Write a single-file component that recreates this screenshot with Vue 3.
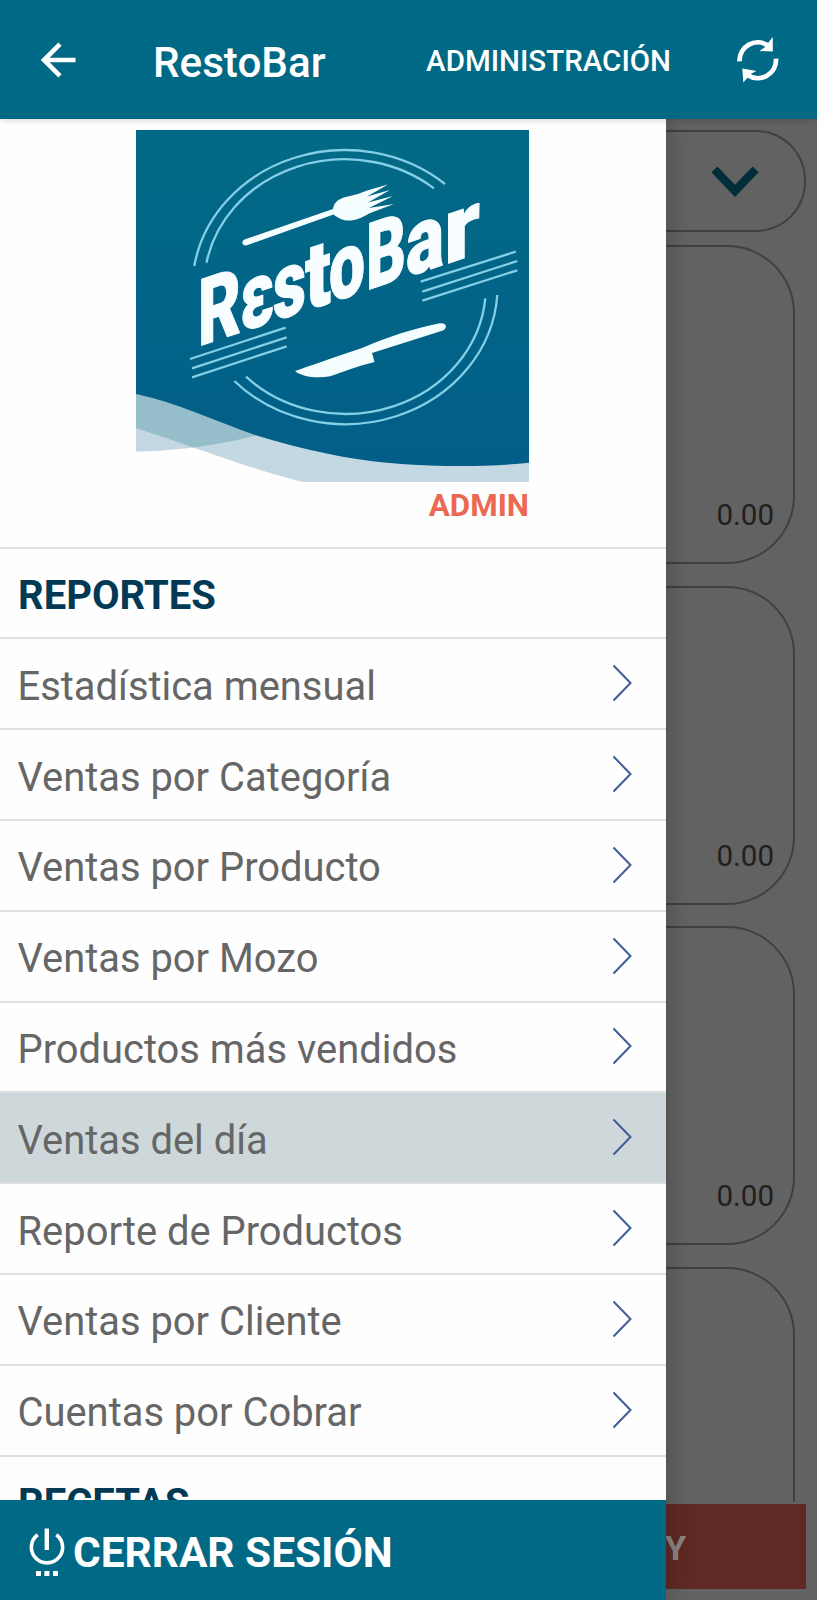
<script setup>
import { ref } from "vue";

const reports = [
  "Estadística mensual",
  "Ventas por Categoría",
  "Ventas por Producto",
  "Ventas por Mozo",
  "Productos más vendidos",
  "Ventas del día",
  "Reporte de Productos",
  "Ventas por Cliente",
  "Cuentas por Cobrar",
];
const selected = ref("Ventas del día");

// the last card has no total yet
const totals = ["0.00", "0.00", "0.00", ""];

// x offset and width of every letter of the logo wordmark
const wordmark = [
  { char: "R", x: 0, width: 43 },
  { char: "ε", x: 42, width: 34 },
  { char: "s", x: 75, width: 33 },
  { char: "t", x: 107, width: 26 },
  { char: "o", x: 131, width: 36 },
  { char: "B", x: 168, width: 40 },
  { char: "a", x: 208, width: 38 },
  { char: "r", x: 246, width: 36 },
];
</script>

<template>
  <div class="app">
    <header class="toolbar">
      <svg class="back-icon" viewBox="0 0 36 36" aria-hidden="true">
        <path d="M35.5 18H4M20 2.2L4 18L20 33.8" />
      </svg>
      <h1 class="title">RestoBar</h1>
      <span class="section">ADMINISTRACIÓN</span>
      <svg class="refresh-icon" viewBox="736 36 44 46" aria-hidden="true">
        <path class="arc" d="M739.5 60.3A18.3 18.3 0 0 1 768 44.5" />
        <path class="head" d="M772.8 36L772.8 50.6L759.5 50L764.5 46.5Z" />
        <path class="arc" d="M776 57.7A18.3 18.3 0 0 1 747.5 74" />
        <path class="head" d="M742.3 67.6L756.5 70L751.5 72.5L743.3 81.5Z" />
      </svg>
    </header>

    <div class="body">
      <main class="content">
        <div class="filter">
          <svg class="filter-icon" viewBox="0 0 48 32" aria-hidden="true">
            <path d="M3.4 3.4L24 25L44.6 3.4" />
          </svg>
        </div>
        <div class="cards">
          <div v-for="(total, i) in totals" :key="i" class="card">{{ total }}</div>
        </div>
        <button class="pay">Y</button>
      </main>

      <aside class="drawer">
        <div class="profile">
          <svg class="logo" viewBox="136 130 393 352" role="img" aria-label="RestoBar">
            <defs>
              <linearGradient id="sea" x1="0" y1="0" x2="0" y2="1">
                <stop offset="0" stop-color="#026a86" />
                <stop offset="1" stop-color="#025e88" />
              </linearGradient>
            </defs>
            <rect x="136" y="130" width="393" height="352" fill="#fefefe" />
            <path
              fill="#c3d8e3"
              d="M136 394L255 435L529 455V482H303C255 470 225 458 193 447.5C170 450 155 451.5 136 451.5Z"
            />
            <path fill="#95bdca" d="M136 390L262 434C240 440 215 445 193 447.5Q165 437 136 428.3Z" />
            <path
              fill="url(#sea)"
              d="M136 130H529V462.7C490 467 445 466.5 413 464.8C350 461 305 450 255 435C215 421 175 402 136 394Z"
            />
            <g class="plate">
              <path d="M194.3 266A152.5 138 0 0 1 445 184" />
              <path d="M206.5 262.7A140.5 127 0 0 1 434 188.3" />
              <path d="M497.3 295A152.5 138 0 0 1 234.3 381" />
              <path d="M485.3 298.3A140.5 127 0 0 1 246 376.7" />
              <path d="M420.7 281.7L515.7 251.7M422.3 291.7L517.3 261M422.3 300.7L517.3 270.3" />
              <path d="M190 359L285.7 327.7M192 368.3L286.7 337.3M192 377.3L286.7 346.3" />
            </g>
            <g class="cutlery">
              <path
                d="M244.5 239.5L333 209C334 201 341 197.5 350 196C357 194.5 362 192.5 367 190.5L388 184.5L367 196.5L390 190L368 202.5L393 196L369 208L394 204L369 213.5C360 219 350 223 341 219C337 217.500 335 215.500 333.500 214.500L247 245.300C242.500 246.300 240.500 241.500 244.500 239.500Z"
              />
              <path
                d="M295 371C303 368.500 335 357 362 348C385 338 415 328 440 323.300C447 322.500 447.500 328 443 330.500L372 353L374.500 362C357 366 340 373 330 376.300C318 378.500 301 377 295 371Z"
              />
            </g>
            <g class="wordmark" transform="translate(198 346.5) skewY(-18.4)">
              <text
                v-for="letter in wordmark"
                :key="letter.char"
                :x="letter.x"
                y="0"
                :textLength="letter.width"
                lengthAdjust="spacingAndGlyphs"
              >{{ letter.char }}</text>
            </g>
          </svg>
          <span class="role">ADMIN</span>
        </div>

        <nav class="menu">
          <h2 class="group">REPORTES</h2>
          <a
            v-for="item in reports"
            :key="item"
            class="item"
            :class="{ 'item--active': item === selected }"
            @click="selected = item"
          >
            <span>{{ item }}</span>
            <svg class="chevron" viewBox="0 0 20 38" aria-hidden="true">
              <path d="M1.5 1.5L18.5 19L1.5 36.5" />
            </svg>
          </a>
          <h2 class="group">RECETAS</h2>
        </nav>

        <button class="logout">
          <svg class="power-icon" viewBox="29 1527 36 50" aria-hidden="true">
            <path class="ring" d="M37.7 1534.8A15.6 15.6 0 1 0 56.3 1534.8" />
            <path class="bar" d="M46.8 1528.5V1550" />
            <path class="dots" d="M36 1573.5H41M44.4 1573.5H49.4M53 1573.5H58" />
          </svg>
          <span>CERRAR SESIÓN</span>
        </button>
      </aside>
    </div>
  </div>
</template>

<style>
body {
  margin: 0;
  background: #626262;
}
</style>

<style scoped>
.app {
  display: flex;
  flex-direction: column;
  width: 817px;
  height: 1600px;
  overflow: hidden;
  font-family: Roboto, "Liberation Sans", sans-serif;
}

h1,
h2 {
  margin: 0;
}

button {
  border: 0;
  font-family: inherit;
}

svg {
  display: block;
  flex: none;
  fill: none;
}

.toolbar {
  position: relative;
  z-index: 2;
  display: flex;
  align-items: center;
  flex: none;
  box-sizing: border-box;
  height: 119px;
  padding: 0 37px 0 40px;
  color: #fff;
  background: #006985;
  box-shadow: 0 1px 6px rgba(0, 0, 0, 0.18);
}

.back-icon {
  width: 36px;
  height: 36px;
  stroke: #fff;
  stroke-width: 4.6;
}

.title {
  margin-left: 77px;
  padding-top: 5px;
  font-size: 42.2px;
  font-weight: 500;
}

.section {
  margin-left: auto;
  padding-top: 3px;
  font-size: 29.5px;
  font-weight: 500;
}

.refresh-icon {
  width: 44px;
  height: 46px;
  margin-left: 65px;
}

.refresh-icon .arc {
  stroke: #fff;
  stroke-width: 4.8;
}

.refresh-icon .head {
  fill: #fff;
}

.body {
  position: relative;
  flex: 1;
  min-height: 0;
}

.content {
  display: flex;
  flex-direction: column;
  box-sizing: border-box;
  height: 100%;
  padding: 11px 11px 11px 0;
  background: #626262;
}

.filter {
  display: flex;
  align-items: center;
  justify-content: flex-end;
  flex: none;
  box-sizing: border-box;
  height: 102px;
  padding: 2px 45px 0 0;
  border: 2px solid #404040;
  border-left: 0;
  border-radius: 0 50px 50px 0;
}

.filter-icon {
  width: 48px;
  height: 32px;
  stroke: #002e3a;
  stroke-width: 8.4;
}

.cards {
  display: flex;
  flex-direction: column;
  flex: 1;
  gap: 21.7px;
  min-height: 0;
  margin: 13px 11px 2px 0;
  overflow: hidden;
}

.card {
  display: flex;
  align-items: flex-end;
  justify-content: flex-end;
  flex: none;
  box-sizing: border-box;
  height: 319px;
  padding: 0 19px 30px 0;
  border: 2px solid #404040;
  border-left: 0;
  border-radius: 0 68px 68px 0;
  font-size: 29.5px;
  color: #1f1f1f;
}

.pay {
  flex: none;
  height: 85px;
  padding: 2px 0 0 665px;
  text-align: left;
  font-size: 34px;
  font-weight: 700;
  color: #8b8481;
  background: #5f2924;
}

.drawer {
  position: absolute;
  top: 0;
  left: 0;
  z-index: 1;
  display: flex;
  flex-direction: column;
  width: 666px;
  height: 100%;
  background: #fefefe;
  box-shadow: 2px 0 24px rgba(0, 0, 0, 0.22);
}

.profile {
  display: flex;
  flex-direction: column;
  flex: none;
  box-sizing: border-box;
  width: 393px;
  height: 427.6px;
  margin-left: 136px;
  padding-top: 11px;
}

.logo {
  width: 393px;
  height: 352px;
}

.plate {
  stroke: #83cfe6;
  stroke-width: 2.3;
}

.cutlery {
  fill: #f5feff;
}

.wordmark {
  font-size: 93px;
  font-weight: 900;
  fill: #f8feff;
  stroke: #f8feff;
  stroke-width: 1;
}

.role {
  align-self: flex-end;
  margin-top: 6px;
  font-size: 31.4px;
  font-weight: 700;
  line-height: 36px;
  color: #eb6852;
}

.menu {
  flex: 1;
  min-height: 0;
  overflow: hidden;
}

.group,
.item {
  display: flex;
  align-items: center;
  justify-content: space-between;
  box-sizing: border-box;
  height: 90.8px;
  padding: 5px 34px 0 17.5px;
  border-top: 2px solid #dedfe0;
  font-size: 39.9px;
}

.group {
  padding-left: 18px;
  font-size: 40px;
  font-weight: 700;
  color: #023a56;
}

.item {
  color: #666;
  cursor: pointer;
}

.item--active {
  background: #ced8db;
}

.chevron {
  width: 20px;
  height: 38px;
  margin-top: -6px;
  stroke: #3f5c96;
  stroke-width: 2;
}

.logout {
  display: flex;
  align-items: center;
  flex: none;
  height: 100px;
  padding: 0 0 0 29px;
  font-size: 42.4px;
  font-weight: 700;
  color: #fff;
  background: #006985;
}

.logout span {
  margin-left: 8px;
  padding-top: 4px;
}

.power-icon {
  width: 36px;
  height: 50px;
  margin-top: 4px;
  stroke: #fff;
}

.power-icon .ring {
  stroke-width: 3.6;
}

.power-icon .bar {
  stroke-width: 4.4;
}

.power-icon .dots {
  stroke-width: 5;
}
</style>
